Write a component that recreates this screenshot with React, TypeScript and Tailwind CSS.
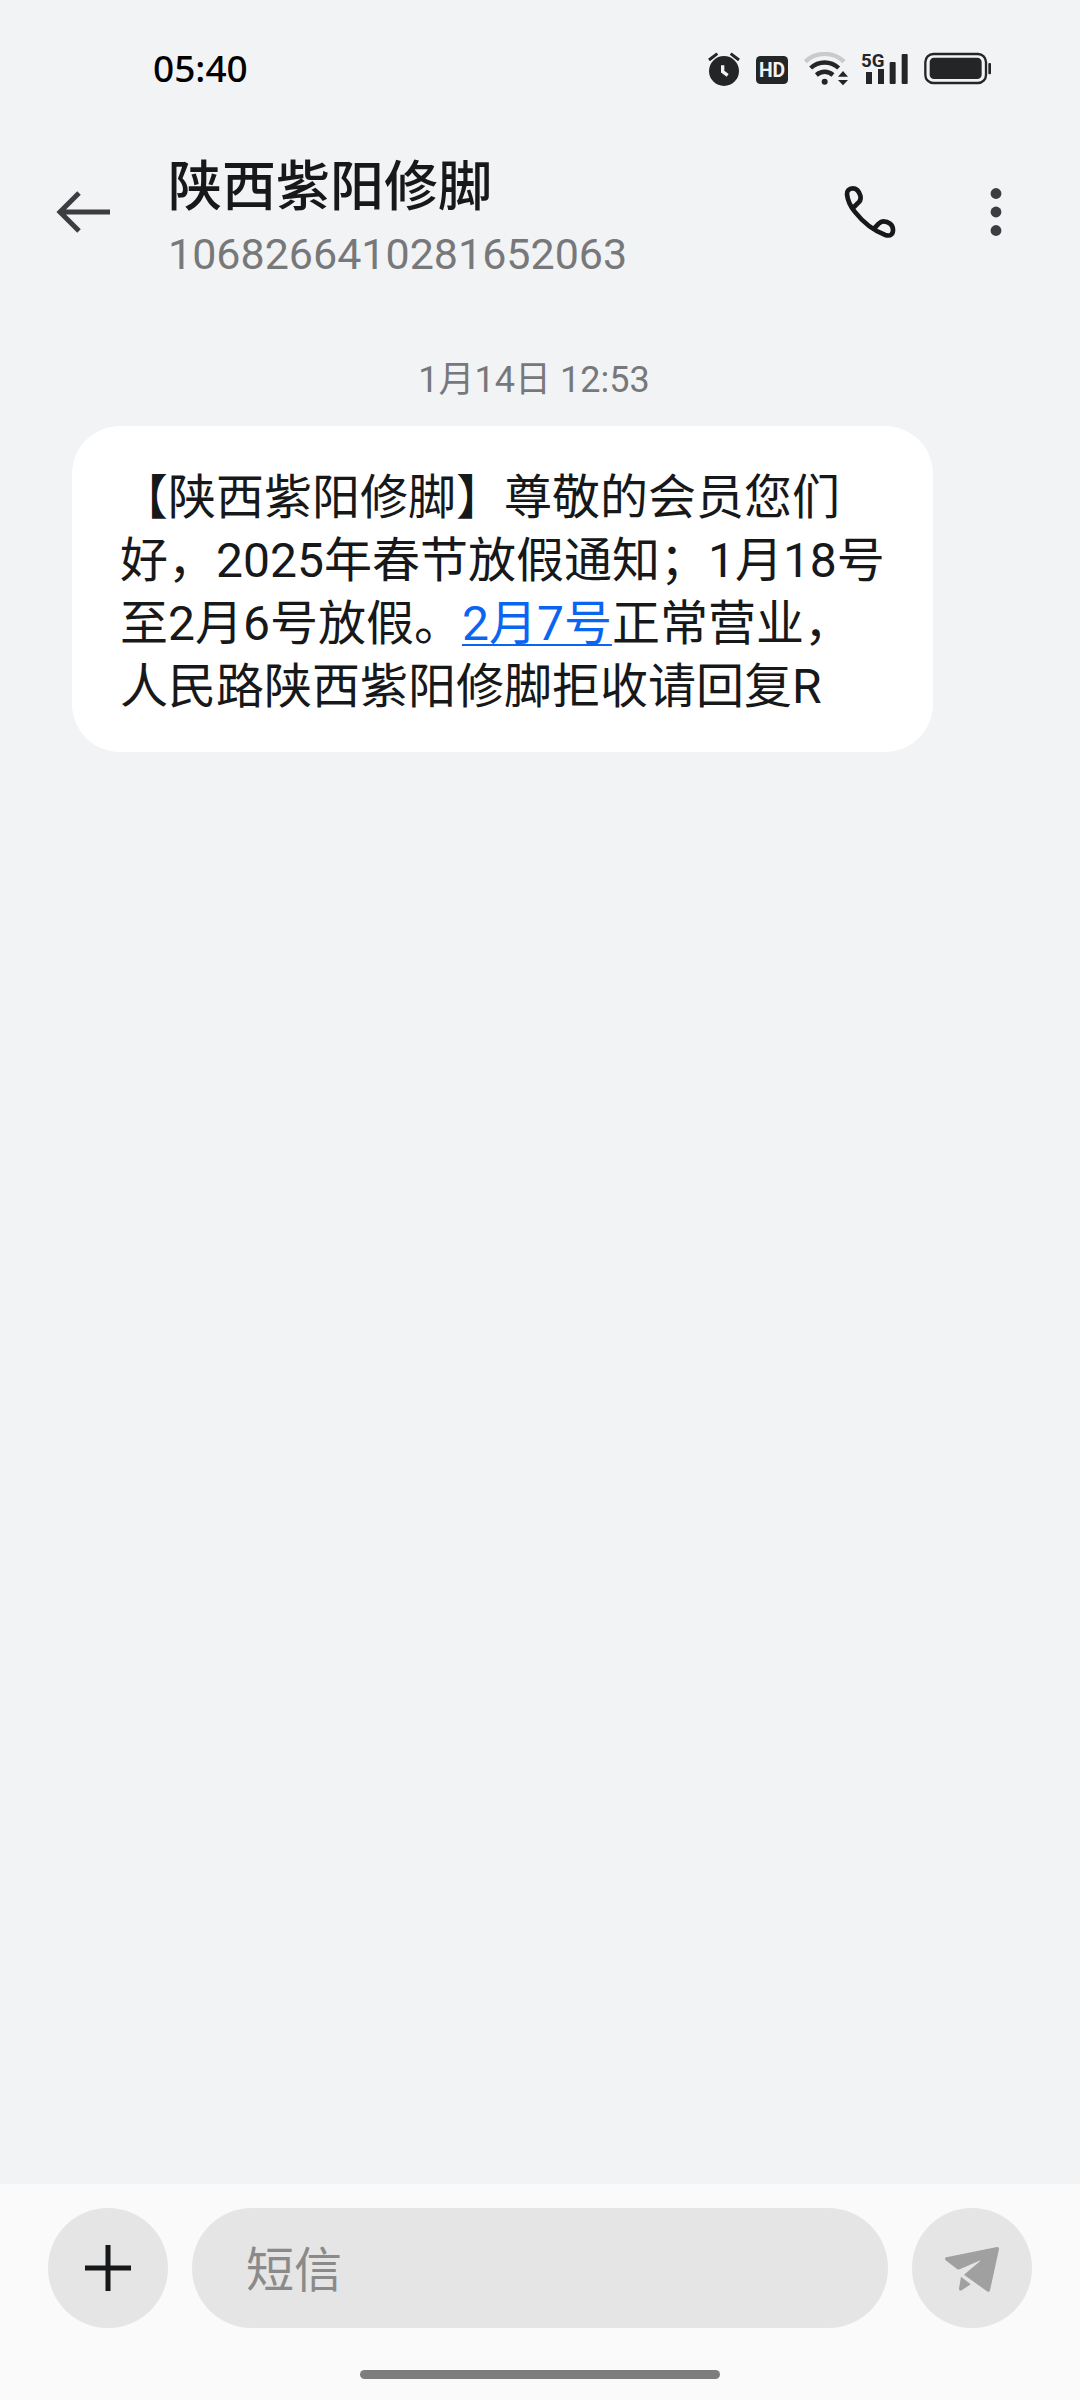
import { useState } from 'react';

type Message = {
  id: string;
  before: string;
  date: string;
  after: string;
};

const contact = {
  name: '陕西紫阳修脚',
  number: '1068266410281652063'
};

const messages: Message[] = [
  {
    id: 'm1',
    before: '【陕西紫阳修脚】尊敬的会员您们好，2025年春节放假通知；1月18号至2月6号放假。',
    date: '2月7号',
    after: '正常营业，人民路陕西紫阳修脚拒收请回复R'
  }
];

function AlarmIcon() {
  return (
    <svg aria-hidden="true" className="h-[34px] w-[35px]" viewBox="54 36 105 102">
      <circle cx="102" cy="93" fill="#242527" r="45" />
      <path d="M57 60 L82 41 M147 60 L122 41" fill="none" stroke="#242527" strokeWidth="9" />
      <path d="M98 76 V95 L113 106" fill="none" stroke="#f2f3f5" strokeWidth="10" />
    </svg>
  );
}

function HdIcon() {
  return (
    <svg aria-hidden="true" className="h-[34px] w-[35px]" viewBox="198 36 105 102">
      <rect fill="#242527" height="84" rx="13" width="96" x="198" y="48" />
      <text
        className="font-[Roboto,sans-serif] text-[58px] font-bold"
        fill="#f2f3f5"
        textAnchor="middle"
        x="246"
        y="111"
      >
        HD
      </text>
    </svg>
  );
}

function WifiIcon() {
  return (
    <svg aria-hidden="true" className="h-[34px] w-[44px]" viewBox="342 36 132 102">
      <path d="M346 65 C378 34 430 34 462 65" fill="none" stroke="#c9cacd" strokeWidth="13" />
      <path d="M362 84 C386 62 422 62 446 84" fill="none" stroke="#242527" strokeWidth="13" />
      <path d="M379 105 C394 92 414 92 429 105" fill="none" stroke="#242527" strokeWidth="13" />
      <circle cx="404" cy="125" fill="#242527" r="9" />
      <path d="M459 93 L474 110 H444 Z M444 120 H474 L459 136 Z" fill="#242527" />
    </svg>
  );
}

function SignalIcon() {
  return (
    <svg aria-hidden="true" className="h-[34px] w-[50px] overflow-visible" viewBox="513 36 150 102">
      <text className="font-[Roboto,sans-serif] text-[56px] font-bold" fill="#242527" x="513" y="80">
        5G
      </text>
      <path d="M528 96 H546 V132 H528 Z M564 87 H582 V132 H564 Z" fill="#242527" />
      <rect fill="#242527" height="66" rx="3" width="18" x="599" y="66" />
      <rect fill="#242527" height="90" rx="3" width="18" x="635" y="42" />
    </svg>
  );
}

function BatteryIcon() {
  return (
    <svg aria-hidden="true" className="h-[34px] w-[67px]" viewBox="702 36 201 102">
      <rect fill="none" height="87" rx="24" stroke="#242527" strokeWidth="7" width="182" x="706" y="42" />
      <rect fill="#242527" height="64" rx="13" width="156" x="719" y="53" />
      <rect fill="#242527" height="34" rx="3" width="8" x="895" y="69" />
    </svg>
  );
}

function StatusBar() {
  return (
    <div className="flex h-[138px] items-center justify-between pr-[89px] pl-[153px]">
      <time className="pb-0.5 font-['Noto_Sans',sans-serif] text-[37px] font-medium text-black">05:40</time>
      <div className="flex items-center gap-[13px]">
        <AlarmIcon />
        <HdIcon />
        <WifiIcon />
        <SignalIcon />
        <BatteryIcon />
      </div>
    </div>
  );
}

function ChatHeader() {
  return (
    <header className="flex h-[148px] items-center pr-[78px] pl-14">
      <button aria-label="返回" type="button">
        <svg className="h-12 w-14" fill="none" stroke="#3c3d40" strokeWidth="5" viewBox="0 0 56 48">
          <path d="M54 24 H4 M23 5 L4 24 L23 43" />
        </svg>
      </button>
      <div className="ml-14 flex-1 pt-1">
        <h1 className="text-[54px] leading-[80px] font-medium text-[#17181a]">{contact.name}</h1>
        <p className="text-[43px] leading-[52px] text-[#77787a]">{contact.number}</p>
      </div>
      <div className="flex items-center gap-[94px]">
        <button aria-label="拨打电话" type="button">
          <svg
            className="h-[54px] w-[52px]"
            fill="none"
            stroke="#17181a"
            strokeLinejoin="round"
            strokeWidth="14"
            viewBox="72 75 156 162"
          >
            <path d="M99 144 L118 125 Q124 118 121 107 C117 93 109 85 98 85 C87 85 80 93 81 103 C83 123 92 140 104 155 C130 188 165 214 196 225 C212 230 220 221 219 208 C218 194 206 184 190 184 C184 184 180 187 176 191 L162 206" />
          </svg>
        </button>
        <button aria-label="更多" type="button">
          <svg className="h-12 w-3" fill="#3c3d40" viewBox="0 0 12 48">
            <circle cx="6" cy="5.5" r="5.4" />
            <circle cx="6" cy="24" r="5.4" />
            <circle cx="6" cy="42.5" r="5.4" />
          </svg>
        </button>
      </div>
    </header>
  );
}

function Composer() {
  const [draft, setDraft] = useState('');

  return (
    <footer className="bg-[#fafafa] pt-6">
      <form className="flex items-center gap-6 px-12" onSubmit={(event) => event.preventDefault()}>
        <button
          aria-label="添加"
          className="flex size-[120px] shrink-0 items-center justify-center rounded-full bg-[#e5e5e5]"
          type="button"
        >
          <svg className="size-12" stroke="#17181a" strokeWidth="5" viewBox="0 0 48 48">
            <path d="M24 1 V47 M1 24 H47" />
          </svg>
        </button>
        <input
          aria-label="短信"
          className="h-[120px] min-w-0 flex-1 rounded-full bg-[#e5e5e5] px-[54px] pt-1 text-[48px] text-[#17181a] outline-none placeholder:text-[#8a8a8a]"
          onChange={(event) => setDraft(event.target.value)}
          placeholder="短信"
          type="text"
          value={draft}
        />
        <button
          aria-label="发送"
          className="flex size-[120px] shrink-0 items-center justify-center rounded-full bg-[#e5e5e5]"
          type="submit"
        >
          <svg className="size-[60px]" fill="#a0a0a0" viewBox="1206 204 180 180">
            <path d="M1219 262 L1371 231 Q1378 230 1377 237 L1350 361 Q1348 369 1341 364 L1272 314 L1320 274 Q1323 270 1318 272 L1259 298 Q1255 300 1251 297 L1217 271 Q1212 264 1219 262 Z" />
            <path d="M1263 320 L1292 343 L1265 361 Q1257 365 1257 356 Z" />
          </svg>
        </button>
      </form>
      <div className="mx-auto mt-[42px] mb-[21px] h-[9px] w-1/3 rounded-full bg-[#7d7d7d]" />
    </footer>
  );
}

export default function App() {
  return (
    <div className="flex min-h-screen flex-col bg-[#f2f3f5] font-[Roboto,'Noto_Sans_CJK_SC',sans-serif]" lang="zh-CN">
      <StatusBar />
      <ChatHeader />
      <main className="flex-1 pt-[68px] pr-[84px] pl-[72px]">
        <p className="mb-5 text-center text-[36px] leading-[52px] text-[#77787a]">1月14日 12:53</p>
        {messages.map((message) => (
          <p
            className="w-fit max-w-[861px] rounded-[48px] bg-white px-12 pt-10 pb-[34px] text-[48px] leading-[63px] text-[#17181a]"
            key={message.id}
          >
            {message.before}
            <a className="text-[#0a66f0] underline decoration-2 underline-offset-4" href="#date">
              {message.date}
            </a>
            {message.after}
          </p>
        ))}
      </main>
      <Composer />
    </div>
  );
}
